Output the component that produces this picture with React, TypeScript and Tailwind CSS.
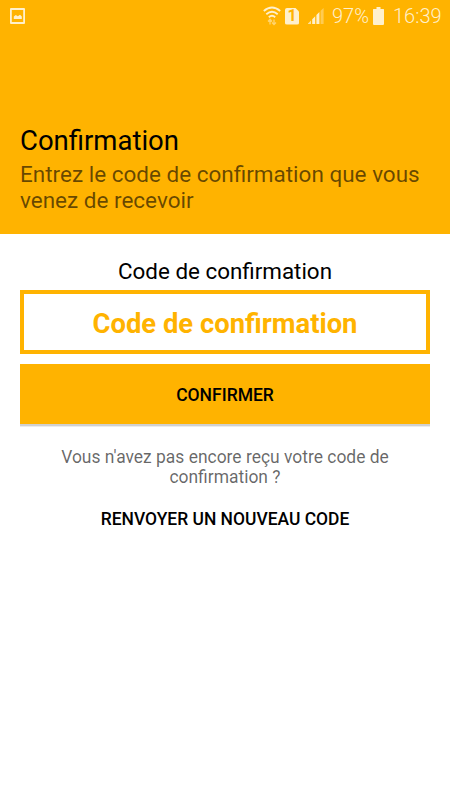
import { useState } from "react";

function StatusBar() {
  return (
    <div className="flex h-8 items-center text-xl leading-8 text-[#fff0cc]">
      <svg className="ml-[10px] shrink-0" width="16" height="16" viewBox="0 0 16 16" fill="currentColor">
        <path fillRule="evenodd" d="M1 0h13a1 1 0 0 1 1 1v14a1 1 0 0 1-1 1H1a1 1 0 0 1-1-1V1a1 1 0 0 1 1-1zM1.800 2v12h11.400V2z" />
        <path d="M3.800 11V8.500l2-1.500 2 1.200L10 6.800l1.800 1.700V11z" />
      </svg>
      <svg className="ml-[237px] shrink-0" width="18" height="20" viewBox="0 0 18 20" fill="none" stroke="currentColor">
        <path strokeWidth="1.800" d="M.8 5Q9-2 17.200 5M3.300 8.200Q9 3.200 14.700 8.200M5.800 11.200Q9 8.400 12.200 11.200" />
        <path strokeWidth="1.300" opacity=".55" d="M7 18.500v-5M5 15.500l2-2.200 2 2.200M11 13.500v5M9 16.500l2 2 2-2" />
      </svg>
      <span className="ml-1 grid h-[17px] w-[14px] shrink-0 place-items-center rounded-[2px] bg-[#fff0cc] text-base leading-none font-bold text-[#ffb300] [clip-path:polygon(0_0,10px_0,100%_4px,100%_100%,0_100%)]">
        1
      </span>
      <svg className="ml-[9px] shrink-0" width="16" height="16" viewBox="0 0 16 16" fill="currentColor">
        <path opacity=".75" d="M0 15.500l3-3V16H0z" />
        <path d="M4.200 11.200l3-3V16h-3zM8.400 7l3-3v12h-3z" />
        <path opacity=".4" d="M12.600 2.800L15.600 0v16h-3z" />
      </svg>
      <span className="ml-2 w-[38px] font-light">97%</span>
      <svg className="ml-[3px] shrink-0" width="12" height="18" viewBox="0 0 12 18" fill="currentColor">
        <path d="M3.500 0h4v2H10.400a.6.6 0 0 1 .6.6v14.400a1 1 0 0 1-1 1H1a1 1 0 0 1-1-1V2.600A.6.6 0 0 1 .6 2h2.900z" />
      </svg>
      <span className="ml-2 font-light">16:39</span>
    </div>
  );
}

export default function App() {
  const [code, setCode] = useState("");

  return (
    <div className="h-[800px] w-[450px] overflow-hidden bg-white font-[Roboto,sans-serif] text-black">
      <header className="h-[234px] bg-[#ffb300]">
        <StatusBar />
        <div className="px-5 pt-[92px]">
          <h1 className="text-[27.5px] leading-[34px]">Confirmation</h1>
          <p className="mt-[3px] text-[22.5px] leading-[26px] text-black/60">
            Entrez le code de confirmation que vous venez de recevoir
          </p>
        </div>
      </header>
      <main className="flex flex-col px-5 pt-6 text-center">
        <label htmlFor="code" className="text-[22.4px] leading-[26px]">
          Code de confirmation
        </label>
        <input
          id="code"
          value={code}
          onChange={(e) => setCode(e.target.value)}
          placeholder="Code de confirmation"
          className="mt-1.5 h-16 border-4 border-[#ffb300] pt-1 text-center text-[27.4px] font-bold text-[#ffb300] placeholder:text-[#ffb300]"
        />
        <button
          type="button"
          className="mt-2.5 h-[60px] bg-[#ffb300] pt-0.5 text-[17.5px] font-medium shadow-[0_2px_0_#d0d0d0,0_3px_0_#ececec]"
        >
          CONFIRMER
        </button>
        <p className="mt-[23px] px-5 text-[17.45px] leading-5 text-black/60">
          Vous n'avez pas encore reçu votre code de confirmation ?
        </p>
        <button type="button" className="mt-5 text-[17.45px] leading-6 font-medium">
          RENVOYER UN NOUVEAU CODE
        </button>
      </main>
    </div>
  );
}
